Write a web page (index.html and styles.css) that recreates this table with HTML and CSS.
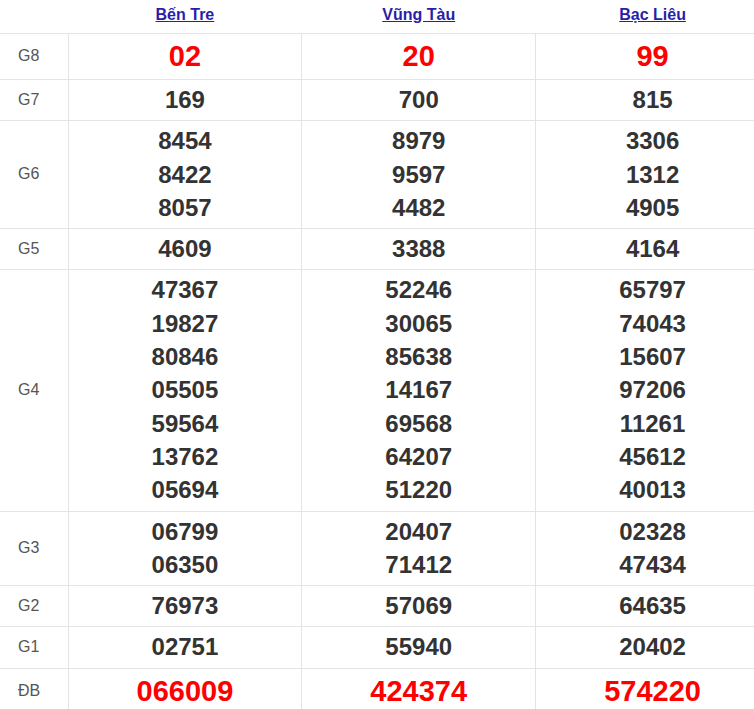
FILE: index.html
```html
<!DOCTYPE html>
<html lang="vi">
<head>
<meta charset="utf-8">
<title>Kết quả xổ số</title>
<link rel="stylesheet" href="styles.css">
</head>
<body>
<table class="kq">
  <thead>
    <tr class="head">
      <th class="lbl"></th>
      <th><a href="#">Bến Tre</a></th>
      <th><a href="#">Vũng Tàu</a></th>
      <th><a href="#">Bạc Liêu</a></th>
    </tr>
  </thead>
  <tbody>
    <tr class="big">
      <td class="lbl">G8</td>
      <td><div class="n red">02</div></td>
      <td><div class="n red">20</div></td>
      <td><div class="n red">99</div></td>
    </tr>
    <tr>
      <td class="lbl">G7</td>
      <td><div class="n">169</div></td>
      <td><div class="n">700</div></td>
      <td><div class="n">815</div></td>
    </tr>
    <tr>
      <td class="lbl">G6</td>
      <td><div class="n">8454</div><div class="n">8422</div><div class="n">8057</div></td>
      <td><div class="n">8979</div><div class="n">9597</div><div class="n">4482</div></td>
      <td><div class="n">3306</div><div class="n">1312</div><div class="n">4905</div></td>
    </tr>
    <tr>
      <td class="lbl">G5</td>
      <td><div class="n">4609</div></td>
      <td><div class="n">3388</div></td>
      <td><div class="n">4164</div></td>
    </tr>
    <tr>
      <td class="lbl">G4</td>
      <td><div class="n">47367</div><div class="n">19827</div><div class="n">80846</div><div class="n">05505</div><div class="n">59564</div><div class="n">13762</div><div class="n">05694</div></td>
      <td><div class="n">52246</div><div class="n">30065</div><div class="n">85638</div><div class="n">14167</div><div class="n">69568</div><div class="n">64207</div><div class="n">51220</div></td>
      <td><div class="n">65797</div><div class="n">74043</div><div class="n">15607</div><div class="n">97206</div><div class="n">11261</div><div class="n">45612</div><div class="n">40013</div></td>
    </tr>
    <tr>
      <td class="lbl">G3</td>
      <td><div class="n">06799</div><div class="n">06350</div></td>
      <td><div class="n">20407</div><div class="n">71412</div></td>
      <td><div class="n">02328</div><div class="n">47434</div></td>
    </tr>
    <tr>
      <td class="lbl">G2</td>
      <td><div class="n">76973</div></td>
      <td><div class="n">57069</div></td>
      <td><div class="n">64635</div></td>
    </tr>
    <tr>
      <td class="lbl">G1</td>
      <td><div class="n">02751</div></td>
      <td><div class="n">55940</div></td>
      <td><div class="n">20402</div></td>
    </tr>
    <tr class="big">
      <td class="lbl">ĐB</td>
      <td><div class="n red">066009</div></td>
      <td><div class="n red">424374</div></td>
      <td><div class="n red">574220</div></td>
    </tr>
  </tbody>
</table>
</body>
</html>
```

FILE: styles.css
```css
html, body {
  margin: 0;
  padding: 0;
  background: #fff;
  overflow: hidden;
}

.kq {
  width: 770px;
  border-collapse: collapse;
  table-layout: fixed;
  font-family: "Liberation Sans", Arial, sans-serif;
}

.kq th.lbl, .kq td.lbl {
  width: 68px;
}

.head th {
  height: 29px;
  padding: 0 0 4px;
  border-bottom: 1px solid #e4e4e4;
  font-size: 16px;
  font-weight: bold;
  text-align: center;
  vertical-align: middle;
}

.head th a {
  color: #2a1ea8;
  text-decoration: underline;
}

.kq td {
  border: 1px solid #e4e4e4;
  border-top: none;
  text-align: center;
  vertical-align: middle;
  padding: 3px 0 4px;
}

.kq td:first-child {
  border-left: none;
}

.kq td.lbl {
  font-size: 16px;
  color: #555;
  text-align: left;
  padding-left: 18px;
}

.n {
  font-size: 24px;
  font-weight: bold;
  line-height: 33.3px;
  color: #333;
}

.big .n {
  font-size: 29px;
  line-height: 38px;
}

.n.red {
  color: #f00;
}
```
